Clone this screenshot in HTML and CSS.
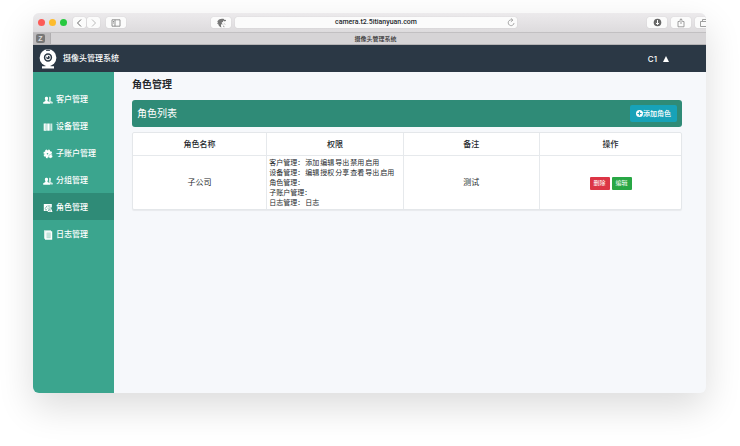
FILE: index.html
```html
<!DOCTYPE html>
<html lang="zh-CN">
<head>
<meta charset="utf-8">
<title>摄像头管理系统</title>
<link rel="stylesheet" href="styles.css">
</head>
<body>
<div class="window">
  <div class="toolbar">
    <div class="lights"><i class="light red"></i><i class="light yellow"></i><i class="light green"></i></div>
    <div class="nav-buttons">
      <button class="tool" aria-label="后退"><svg width="13" height="12" viewBox="0 0 13 12"><path d="M8 2.500L4.500 6 8 9.500" fill="none" stroke="#666" stroke-width="1"/></svg></button>
      <button class="tool" aria-label="前进"><svg width="13" height="12" viewBox="0 0 13 12"><path d="M5 2.500L8.500 6 5 9.500" fill="none" stroke="#bbb" stroke-width="1"/></svg></button>
    </div>
    <button class="tool wide" aria-label="边栏"><svg width="10" height="8" viewBox="0 0 10 8"><path d="M1 .8h8v6.400H1zM4 .8v6.400M2 2.500h1M2 4h1" fill="none" stroke="#777" stroke-width=".8"/></svg></button>
    <div class="address-group">
      <button class="tool wide" aria-label="扩展"><svg width="11" height="10" viewBox="0 0 11 10"><path d="M8 1C5 .1 2 1.300 1.100 4l1-.3L1.100 6l1.100-.3C2.300 7.500 3.500 8.900 5.600 9.500 4.600 7.800 4.900 6.400 6.200 5.400L5.700 4l1.500.2L7 2.600l1.700.8z" fill="#777"/><path d="M6.500 6.300l1 .9M7 8.500l1.500.3M8.300 5.500l.7 1" stroke="#aaa"/><circle cx="9" cy="2.500" r=".8" fill="#555"/></svg></button>
      <div class="address">
        <input class="url" aria-label="网址" value="camera.t2.5itianyuan.com">
        <button class="reload" aria-label="刷新"><svg width="8" height="9" viewBox="0 0 8 9"><path d="M5.500 2.200A2.900 2.900 0 1 0 7 5M3.900.3l2 1.800-2 1.700" fill="none" stroke="#888" stroke-width=".7"/></svg></button>
      </div>
    </div>
    <div class="actions">
      <button class="tool wide" aria-label="下载"><svg width="9" height="9" viewBox="0 0 9 9"><circle cx="4.500" cy="4.500" r="3.800" fill="#666"/><path d="M4.500 2v4.500M2.900 4.900l1.600 1.700 1.600-1.700" fill="none" stroke="#fff" stroke-width="1"/></svg></button>
      <button class="tool wide" aria-label="分享"><svg width="8" height="10" viewBox="0 0 8 10"><path d="M2.800 3.500H1v5.300h6V3.500H5.200M4 6V.9M2.400 2.300L4 .8l1.600 1.500" fill="none" stroke="#888" stroke-width=".8"/></svg></button>
      <button class="tool cut" aria-label="标签页"><svg width="6" height="10" viewBox="0 0 6 10"><path d="M2.500 3V1.500H6M.5 3.500H6M.5 3.500v5H6" fill="none" stroke="#888" stroke-width=".8"/></svg></button>
    </div>
  </div>
  <div class="tabs">
    <div class="pinned"><span class="pin">Z</span></div>
    <div class="tab">摄像头管理系统</div>
  </div>
  <header class="header">
    <svg class="logo" width="18" height="20" viewBox="0 0 18 20"><circle cx="9" cy="8.700" r="8.400" fill="#fff"/><path d="M7.200 1.500q1.800-.8 3.600 0" stroke="#2b3845" stroke-width="1.200" fill="none"/><circle cx="9" cy="8.500" r="3.400" fill="#fff" stroke="#2b3845" stroke-width="1.500"/><circle cx="9" cy="8.500" r="1.800" fill="#2b3845"/><circle cx="8.200" cy="7.600" r=".9" fill="#fff"/><path d="M6.500 15h5v2.300H15v2.200H3v-2.200h3.500z" fill="#fff"/></svg>
    <span class="brand">摄像头管理系统</span>
    <button class="account">C1 <svg width="6" height="6" viewBox="0 0 6 6"><path d="M3 0l3 6H0z" fill="#fff"/></svg></button>
  </header>
  <div class="body">
    <nav class="sidebar">
      <a class="item" href="#"><svg width="10" height="10" viewBox="0 0 10 10"><path d="M6 2c2-.7 2.500 1 1.800 2.800L7.600 6l2.200 1v1.500H7.200L6.800 7 5.900 6.400z" fill="#cfe9e2"/><path d="M3.300 1.700c1.900-.3 2.200 1.700 1.200 3.500v.9L7 7.300v1.400H.2V7.300l2.200-1.200v-.9C1.500 3.500 1.600 1.800 3.300 1.700z" fill="#fff"/></svg>客户管理</a>
      <a class="item" href="#"><svg width="10" height="10" viewBox="0 0 10 10"><path d="M.7 1.500h3v7.200h-3zM4.200 1.500h2.500v7.200H4.200z" fill="#fff"/><path d="M7.300 1.500h2v7.200h-2z" fill="#cfe9e2"/><path d="M2.300 2.200v5.800" stroke="#9ad0c2" stroke-width=".6"/></svg>设备管理</a>
      <a class="item" href="#"><svg width="10" height="10" viewBox="0 0 10 10"><circle cx="4.800" cy="4.800" r="3.500" fill="#fff"/><circle cx="4.800" cy="4.800" r="3.700" fill="none" stroke="#fff" stroke-width="1.400" stroke-dasharray="1.700 1.200"/><circle cx="4.500" cy="4.700" r=".8" fill="#3ba58e"/><circle cx="7.600" cy="7.300" r="1.900" fill="#fff" stroke="#3ba58e" stroke-width=".4"/></svg>子账户管理</a>
      <a class="item" href="#"><svg width="10" height="10" viewBox="0 0 10 10"><path d="M6 2c2-.7 2.500 1 1.800 2.800L7.600 6l2.200 1v1.500H7.200L6.800 7 5.900 6.400z" fill="#cfe9e2"/><path d="M3.300 1.700c1.900-.3 2.200 1.700 1.200 3.500v.9L7 7.300v1.400H.2V7.300l2.200-1.200v-.9C1.500 3.500 1.600 1.800 3.300 1.700z" fill="#fff"/></svg>分组管理</a>
      <a class="item active" href="#"><svg width="10" height="10" viewBox="0 0 10 10"><path d="M.8 1h8v3L8 5l1.500 4H5l-.5-1H.8z" fill="#fff"/><path d="M2 5.800l2-3M4.600 3h2.800M4.500 5.200h1.200M5.200 8.200l1-2.200M7 4v4.500M2 6.800h2" fill="none" stroke="#2f8b77" stroke-width=".6"/></svg>角色管理</a>
      <a class="item" href="#"><svg width="10" height="10" viewBox="0 0 10 10"><path d="M1 .3h7v8.500H1z" fill="#cfe9e2"/><path d="M2.300 1.200H9.200v8.500H2z" fill="#fff"/><path d="M3.500 2.500h4.200v5.800H3.500z" fill="#b9dfd5"/><path d="M3.500 4h4M3.500 6h4" stroke="#dcf0eb" stroke-width=".6"/></svg>日志管理</a>
    </nav>
    <main class="main">
      <h1 class="title">角色管理</h1>
      <section class="banner">
        <h2 class="banner-title">角色列表</h2>
        <button class="add"><svg width="7" height="7" viewBox="0 0 7 7"><circle cx="3.500" cy="3.500" r="3.500" fill="#fff"/><path d="M3.500 1.500v4M1.500 3.500h4" stroke="#17a2b8" stroke-width="1.200"/></svg>添加角色</button>
      </section>
      <div class="card">
        <table class="roles">
          <colgroup><col class="c-name"><col class="c-perm"><col class="c-note"><col class="c-ops"></colgroup>
          <thead><tr><th>角色名称</th><th>权限</th><th>备注</th><th>操作</th></tr></thead>
          <tbody><tr>
            <td>子公司</td>
            <td class="perms">
              <div class="perm"><b>客户管理：</b><span>添加</span><span>编辑</span><span>导出</span><span>禁用</span><span>启用</span></div>
              <div class="perm"><b>设备管理：</b><span>编辑</span><span>授权</span><span>分享</span><span>查看</span><span>导出</span><span>启用</span></div>
              <div class="perm"><b>角色管理：</b></div>
              <div class="perm"><b>子账户管理：</b></div>
              <div class="perm"><b>日志管理：</b><span>日志</span></div>
            </td>
            <td>测试</td>
            <td><div class="ops"><button class="op delete">删除</button><button class="op edit">编辑</button></div></td>
          </tr></tbody>
        </table>
      </div>
    </main>
  </div>
</div>
</body>
</html>
```
FILE: styles.css
```css
* { box-sizing: border-box; }

body {
  margin: 0;
  padding: 13px 34px 53px 33px;
  min-height: 100vh;
  display: flex;
  background: #fff;
  color: #25292d;
  font: 500 8px/12px "Liberation Sans", "Noto Sans CJK SC", sans-serif;
}

button, input {
  margin: 0;
  padding: 0;
  border: 0;
  font: inherit;
  color: inherit;
  background: none;
}

svg { display: block; flex: none; }

.window {
  flex: 1;
  min-width: 0;
  display: flex;
  flex-direction: column;
  overflow: hidden;
  border-radius: 6px;
  background: #f6f8fb;
  box-shadow: 0 14px 36px rgba(0, 0, 0, .14);
}

.toolbar {
  height: 19px;
  display: flex;
  align-items: center;
  padding-left: 5px;
  background: linear-gradient(#eceaec, #dddbdd);
}

.lights { display: flex; gap: 4px; margin-right: 6px; }
.light { width: 7px; height: 7px; border-radius: 50%; }
.red { background: #fc5b57; }
.yellow { background: #fdbc2e; }
.green { background: #28c940; }

.nav-buttons { display: flex; gap: 1px; margin-right: 6px; }

.tool {
  flex: none;
  height: 11px;
  display: flex;
  align-items: center;
  justify-content: center;
  border-radius: 2px;
  background: #fbfbfb;
  box-shadow: 0 0 1px rgba(0, 0, 0, .2);
}

.wide { width: 20px; }
.cut { width: 11px; justify-content: flex-end; border-radius: 2px 0 0 2px; }

.address-group {
  flex: 1;
  display: flex;
  gap: 4px;
  padding: 0 130px 0 85px;
}

.address {
  flex: 1;
  height: 11px;
  display: flex;
  align-items: center;
  padding-right: 2px;
  border-radius: 2px;
  background: #fbfbfb;
  box-shadow: 0 0 1px rgba(0, 0, 0, .2);
}

.url {
  flex: 1;
  min-width: 0;
  height: 11px;
  padding-left: 10px;
  text-align: center;
  font: 500 7px/11px Roboto, sans-serif;
}

.actions { display: flex; gap: 4px; }

.tabs {
  height: 13px;
  display: flex;
  border-top: 1px solid #c2c0c2;
  border-bottom: 1px solid #b5b3b5;
  background: #d6d4d6;
}

.pinned {
  width: 18px;
  display: flex;
  align-items: center;
  justify-content: center;
  padding-right: 2px;
  background: #bdbbbd;
  border-right: 1px solid #b0aeb0;
}

.pin {
  width: 9px;
  height: 9px;
  border-radius: 2px;
  background: #777;
  color: #ddd;
  font-size: 7px;
  line-height: 9px;
  font-weight: 700;
  text-align: center;
}

.tab {
  flex: 1;
  padding-right: 6px;
  text-align: center;
  font-size: 6px;
  line-height: 12px;
  color: #333;
}

.header {
  height: 27px;
  display: flex;
  align-items: center;
  padding: 0 37px 0 6px;
  background: #2b3845;
  color: #fff;
}

.brand { margin-left: 6px; }

.account {
  display: flex;
  align-items: center;
  gap: 6px;
  margin-left: auto;
  font-family: Inter, sans-serif;
}

.body { flex: 1; display: flex; }

.sidebar {
  width: 81px;
  flex: none;
  padding-top: 13px;
  background: #3ba58e;
}

.item {
  height: 27px;
  display: flex;
  align-items: center;
  gap: 3px;
  padding: 2px 0 0 10px;
  color: #fff;
  text-decoration: none;
}

.active { background: #2f8b77; }

.main { flex: 1; min-width: 0; padding: 5px 24px 24px 18px; }

.title, .banner-title {
  margin: 0;
  font-size: 10px;
  line-height: 16px;
  font-weight: 700;
}

.banner {
  height: 27px;
  display: flex;
  align-items: center;
  justify-content: space-between;
  margin-top: 7px;
  padding: 0 5px;
  border-radius: 3px;
  background: #2f8b77;
  color: #fff;
}

.banner-title { font-weight: 400; }

.add {
  height: 17px;
  display: flex;
  align-items: center;
  padding: 0 6px;
  border-radius: 2px;
  background: #17a2b8;
  font-size: 7px;
}

.card {
  margin-top: 5px;
  border: 1px solid #e4e7ea;
  border-radius: 2px;
  background: #fff;
  box-shadow: 0 1px 1px rgba(0, 0, 0, .06);
}

.roles {
  width: 100%;
  table-layout: fixed;
  border-collapse: collapse;
}

.c-name { width: 24.4%; }
.c-perm, .c-note { width: 24.9%; }
.c-ops { width: 25.8%; }

.roles th, .roles td {
  padding: 2px 0 0;
  text-align: center;
  vertical-align: middle;
  font-weight: 400;
}

.roles th { height: 22px; font-weight: 500; border-bottom: 1px solid #e6e9ec; }
.roles th + th, .roles td + td { border-left: 1px solid #e6e9ec; }

.roles .perms { padding: 2px 2px 1px; }

.perm {
  display: flex;
  gap: 1px;
  font-size: 7px;
  line-height: 10px;
}

.perm b { font-weight: 400; }

.ops { display: flex; justify-content: center; gap: 2px; }

.op {
  width: 20px;
  height: 13px;
  border-radius: 1px;
  color: #fff;
  font-size: 6px;
  line-height: 13px;
}

.delete { background: #dc3545; }
.edit { background: #28a745; }
```
